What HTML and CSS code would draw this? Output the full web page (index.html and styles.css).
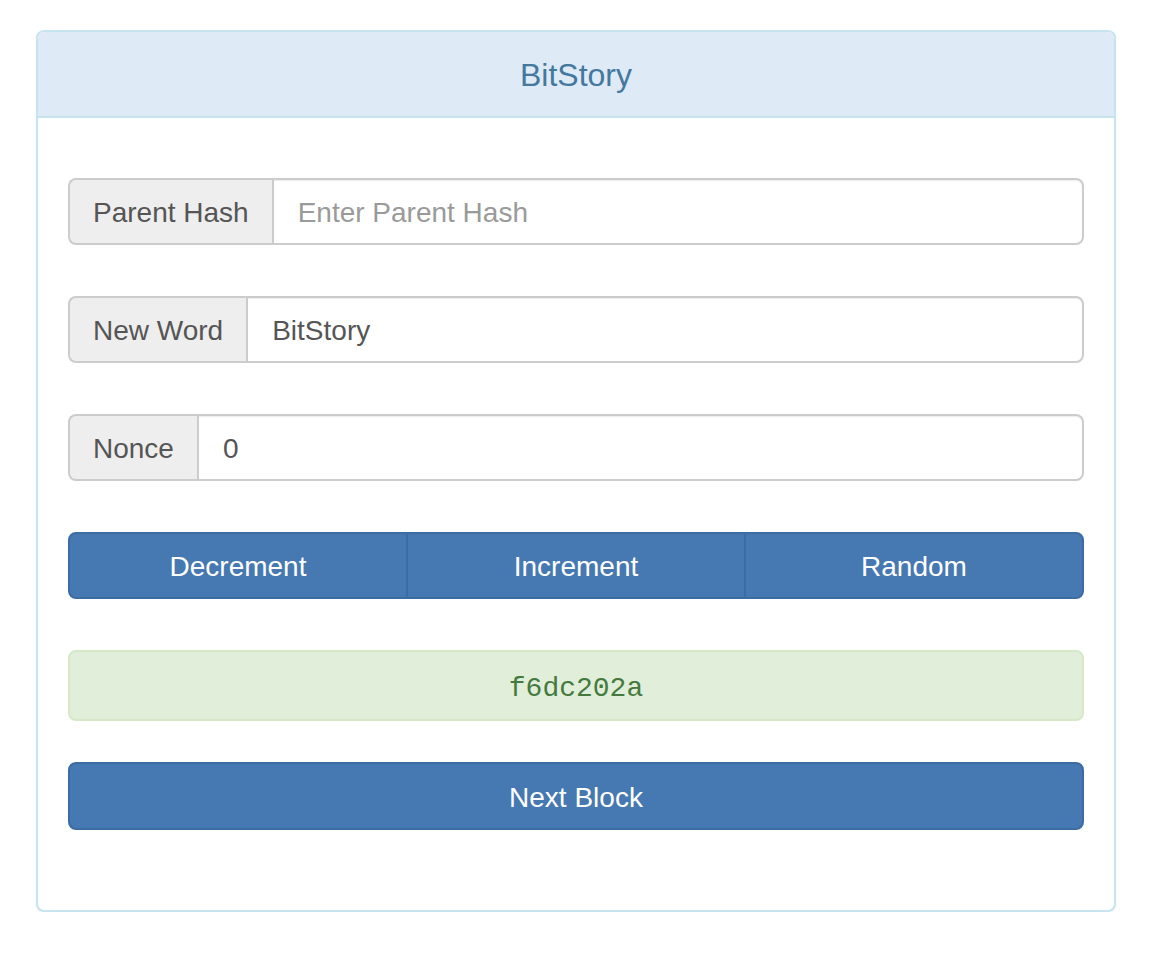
FILE: index.html
```html
<!DOCTYPE html>
<html>
<head>
<meta charset="utf-8">
<title>BitStory</title>
<link rel="stylesheet" href="styles.css">
</head>
<body>
<div class="panel">
  <div class="panel-heading">BitStory</div>
  <div class="panel-body">
    <div class="input-group">
      <span class="addon">Parent Hash</span>
      <input class="field" type="text" placeholder="Enter Parent Hash">
    </div>
    <div class="input-group">
      <span class="addon">New Word</span>
      <input class="field" type="text" value="BitStory">
    </div>
    <div class="input-group">
      <span class="addon">Nonce</span>
      <input class="field" type="text" value="0">
    </div>
    <div class="btn-group">
      <button class="btn">Decrement</button>
      <button class="btn">Increment</button>
      <button class="btn">Random</button>
    </div>
    <div class="alert">f6dc202a</div>
    <button class="btn btn-block">Next Block</button>
  </div>
</div>
</body>
</html>
```
FILE: styles.css
```css
html, body {
  margin: 0;
  padding: 0;
  background: #ffffff;
}
body {
  font-family: "Liberation Sans", Arial, sans-serif;
  font-size: 28px;
  color: #555555;
}
.panel {
  width: 1080px;
  box-sizing: border-box;
  margin: 30px 0 0 36px;
  border: 2px solid #c6e4ef;
  border-radius: 8px;
  background: #ffffff;
  box-shadow: 0 1px 2px rgba(0,0,0,0.05);
}
.panel-heading {
  height: 86px;
  box-sizing: border-box;
  border-bottom: 2px solid #c6e4ef;
  background: #deebf6;
  border-radius: 6px 6px 0 0;
  color: #45789e;
  font-size: 32px;
  display: flex;
  align-items: center;
  justify-content: center;
  padding-top: 2px;
}
.panel-body {
  padding: 60px 30px 80px;
  display: flex;
  flex-direction: column;
  gap: 51px;
}
.input-group {
  display: flex;
  height: 67px;
}
.addon {
  display: flex;
  align-items: center;
  padding: 3px 23px 0;
  background: #eeeeee;
  border: 2px solid #cccccc;
  border-right: 0;
  border-radius: 8px 0 0 8px;
  color: #555555;
  white-space: nowrap;
}
.field {
  flex: 1;
  min-width: 0;
  height: 67px;
  box-sizing: border-box;
  margin: 0;
  padding: 3px 24px 0;
  border: 2px solid #cccccc;
  border-radius: 0 8px 8px 0;
  font-family: "Liberation Sans", Arial, sans-serif;
  font-size: 28px;
  color: #555555;
  background: #ffffff;
  outline: none;
  box-shadow: inset 0 1px 1px rgba(0,0,0,0.075);
}
.field::placeholder {
  color: #9a9a9a;
}
.btn-group {
  display: flex;
  height: 67px;
}
.btn {
  box-sizing: border-box;
  margin: 0;
  border: 2px solid #3b6ca4;
  background: #4678b1;
  color: #ffffff;
  font-family: "Liberation Sans", Arial, sans-serif;
  font-size: 28px;
  padding: 3px 0 0;
  cursor: pointer;
}
.btn-group .btn {
  flex: 1;
  height: 67px;
  border-radius: 0;
}
.btn-group .btn + .btn {
  margin-left: -2px;
}
.btn-group .btn:first-child {
  border-radius: 8px 0 0 8px;
}
.btn-group .btn:last-child {
  border-radius: 0 8px 8px 0;
}
.alert {
  height: 71px;
  box-sizing: border-box;
  border: 2px solid #d5e8c8;
  border-radius: 8px;
  background: #e1eed9;
  color: #457a3f;
  font-family: "Liberation Mono", "Courier New", monospace;
  font-size: 28px;
  display: flex;
  align-items: center;
  justify-content: center;
  padding-top: 6px;
}
.btn-block {
  width: 100%;
  height: 68px;
  border-radius: 8px;
  margin-top: -10px;
}
```
